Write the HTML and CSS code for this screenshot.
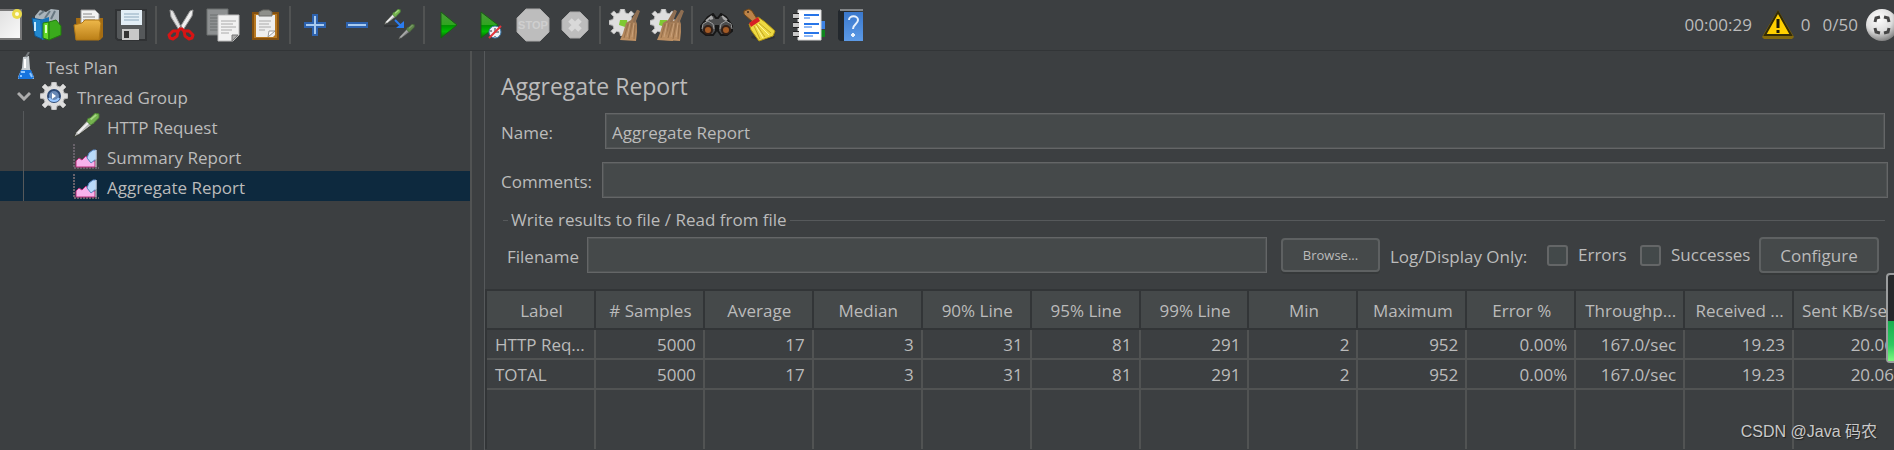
FILE: index.html
```html
<!DOCTYPE html>
<html lang="en">
	<head>
		<meta charset="UTF-8" />
		<meta name="viewport" content="width=device-width, initial-scale=1.0" />
		<title>Aggregate Report</title>
		<link rel="stylesheet" href="styles.css">
	</head>
	<body>
		<!-- shared icon parts -->
		<svg class="defs" width="0" height="0" aria-hidden="true">
			<defs>
				<linearGradient id="paper" x1="0" y1="0" x2="1" y2="1">
					<stop offset="0" stop-color="#dcdcdc" />
					<stop offset="1" stop-color="#fafafa" />
				</linearGradient>
				<linearGradient id="folder" x1="0" y1="0" x2="0" y2="1">
					<stop offset="0" stop-color="#eeb84a" />
					<stop offset="1" stop-color="#bb7f17" />
				</linearGradient>
				<linearGradient id="green" x1="0" y1="0" x2="0" y2="1">
					<stop offset="0" stop-color="#4f9a3c" />
					<stop offset="0.5" stop-color="#2ea51f" />
					<stop offset="0.52" stop-color="#009000" />
					<stop offset="0.75" stop-color="#00bd00" />
					<stop offset="1" stop-color="#0a5c08" />
				</linearGradient>
				<linearGradient id="book" x1="0" y1="0" x2="0" y2="1">
					<stop offset="0" stop-color="#3a78cc" />
					<stop offset="1" stop-color="#5c9ae6" />
				</linearGradient>
				<linearGradient id="straw" x1="0" y1="0" x2="0" y2="1">
					<stop offset="0" stop-color="#8c6a4c" />
					<stop offset="1" stop-color="#c09264" />
				</linearGradient>
				<radialGradient id="ball" cx="0.4" cy="0.3" r="0.7">
					<stop offset="0" stop-color="#ffffff" />
					<stop offset="0.6" stop-color="#dddddd" />
					<stop offset="1" stop-color="#858585" />
				</radialGradient>
			</defs>
			<symbol id="gear" viewBox="0 0 28 28">
				<path d="M12 0h4l1 4 3 1 3-3 3 3-3 3 1 3 4 1v4l-4 1-1 3 3 3-3 3-3-3-3 1-1 4h-4l-1-4-3-1-3 3-3-3 3-3-1-3-4-1v-4l4-1 1-3-3-3 3-3 3 3 3-1z" fill="#dedede" stroke="#b5b5b5" />
			</symbol>
			<symbol id="broom" viewBox="0 0 20 32">
				<path d="M17 1l3 1-4 10 1 3v8l-1 9-16-1 3-7 3-10 5-3z" fill="url(#straw)" />
				<path d="M18 1l-4 12" fill="none" stroke="#8d6f55" stroke-width="2" />
				<path d="M8 15L4 29M12 14l-3 16M15 16l-1 14" fill="none" stroke="#98704a" />
				<path d="M10 14L7 28M14 14l-2 14" fill="none" stroke="#cba27a" />
			</symbol>
			<symbol id="pipette" viewBox="0 0 30 28">
				<path d="M18 6l6 5L8 23l-6 3 2-5z" fill="#b9b9b9" stroke="#33372f" />
				<path d="M19 9L6 22" stroke="#f4f4f4" stroke-width="2" />
				<path d="M17 6l3-1 5-5 4 1v4l-6 6-3 2-4-4z" fill="#75b34f" stroke="#477c32" />
				<path d="M20 7l6-5" stroke="#a7d785" stroke-width="2" />
			</symbol>
			<symbol id="report" viewBox="0 0 28 26">
				<path d="M2 1v24h25" fill="none" stroke="#68626a" stroke-width="2" stroke-dasharray="2 1" />
				<path d="M4 24v-6l3-3 3 2 4-4 4 5h5v6z" fill="#f7b2eb" stroke="#b92f78" />
				<path d="M15 15l2-5 4-3h3v9l-5 4z" fill="#b9dafa" stroke="#5c88c5" />
				<path d="M24 7v17" stroke="#eee" />
			</symbol>
		</svg>

		<div class="app">
			<header class="toolbar">
				<div class="tools">
					<button type="button" class="tool tool-cut" aria-label="New">
						<svg width="32" height="32" viewBox="0 0 32 32">
							<path d="M1 1h30v29H1z" fill="url(#paper)" stroke="#777" stroke-width="2" />
							<circle cx="27" cy="5" r="5" fill="#eadb4a" />
							<circle cx="27" cy="5" r="2" fill="#fffde0" />
						</svg>
					</button>
					<button type="button" class="tool" aria-label="Templates">
						<svg width="32" height="32" viewBox="0 0 32 32">
							<path d="M4 7l5-6 6 2 5-3 8 1v14H4z" fill="#aab4bb" />
							<path d="M8 6l5-4M14 9l5-7M20 10l4-8" stroke="#687780" stroke-width="2" />
							<path d="M1 9l10 2v19L4 27z" fill="#2188cf" stroke="#0e5592" />
							<path d="M9 11l9-3v21l-7 2z" fill="#1571b6" />
							<path d="M4 13v9" stroke="#c8ecff" stroke-width="2" />
							<path d="M12 14l6-1v18l-6-2z" fill="#65d82a" stroke="#237b0d" />
							<path d="M18 13l7-2 5 6v9l-12 5z" fill="#3aab1c" stroke="#227d0d" />
							<path d="M15 16v8" stroke="#dcffc8" stroke-width="2" />
						</svg>
					</button>
					<button type="button" class="tool" aria-label="Open">
						<svg width="32" height="32" viewBox="0 0 32 32">
							<path d="M3 9h27v19l-3 3H4z" fill="#a66d12" />
							<path d="M8 1h14l4 4v14H8z" fill="#f2f2f2" stroke="#999" />
							<path d="M10 5h9M10 8h12M10 11h12" stroke="#888" />
							<path d="M1 16l8-2 3-3h14l2 3-2 17H3z" fill="url(#folder)" stroke="#b07714" />
						</svg>
					</button>
					<button type="button" class="tool" aria-label="Save">
						<svg width="32" height="32" viewBox="0 0 32 32">
							<path d="M1 1h30v30H3l-2-2z" fill="#55585a" stroke="#303234" stroke-width="2" />
							<path d="M6 1h21v15H6z" fill="#e3eef6" />
							<path d="M9 5h15M9 8h15M9 11h15" stroke="#8ea9bd" />
							<path d="M7 20h17v11H7z" fill="#c8c8c8" />
							<path d="M9 22h5v7H9z" fill="#333" />
						</svg>
					</button>
					<span class="sep"></span>
					<button type="button" class="tool" aria-label="Cut">
						<svg width="32" height="32" viewBox="0 0 32 32">
							<path d="M5 1l3 1 9 18-3 1L6 8z" fill="#e2e2e2" stroke="#999" />
							<path d="M28 1l-3 1-11 18 4 1 9-14z" fill="#f0f0f0" stroke="#999" />
							<circle cx="16" cy="18" r="1" fill="#777" />
							<path d="M13 22l-1 5-4 3-3-1-1-3 4-4zM19 22l1 5 4 3 3-1 1-3-4-4z" fill="none" stroke="#d81414" stroke-width="3" stroke-linejoin="round" />
							<path d="M16 19l-4 4M16 19l4 4" stroke="#d81414" stroke-width="3" />
						</svg>
					</button>
					<button type="button" class="tool" aria-label="Copy">
						<svg width="34" height="34" viewBox="0 0 34 34">
							<path d="M1 1h21v26H1z" fill="#8d9091" stroke="#6d7071" />
							<path d="M4 7h15M4 10h12M4 13h12M4 16h8M4 19h8M4 22h8" stroke="#6d7071" />
							<path d="M12 7h21v20l-6 6H12z" fill="#f1f1f1" stroke="#bbb" />
							<path d="M15 13h15M15 16h12M15 19h15M15 22h11M15 25h8" stroke="#aaa" />
							<path d="M26 33v-6h6z" fill="#aaa" stroke="#777" />
						</svg>
					</button>
					<button type="button" class="tool" aria-label="Paste">
						<svg width="32" height="32" viewBox="0 0 32 32">
							<path d="M4 4h25v26H4z" fill="#b77821" stroke="#84500f" stroke-width="2" />
							<path d="M7 6h19v20l-2 2H7z" fill="#eee" />
							<path d="M10 7V3l4-2h6l3 2v4z" fill="#8f908b" stroke="#6d6d68" />
							<path d="M10 12h12M10 15h10M10 18h12M10 21h6" stroke="#aaa" />
							<path d="M19 28l1-6h6z" fill="#fff" stroke="#999" />
						</svg>
					</button>
					<span class="sep"></span>
					<button type="button" class="tool" aria-label="Expand all">
						<svg width="22" height="22" viewBox="0 0 22 22">
							<path d="M9 1h4v8h8v4h-8v8H9v-8H1V9h8z" fill="#a9caed" stroke="#2d62ae" stroke-width="2" />
						</svg>
					</button>
					<button type="button" class="tool" aria-label="Collapse all">
						<svg width="22" height="22" viewBox="0 0 22 22">
							<path d="M1 9h20v4H1z" fill="#a9caed" stroke="#2d62ae" stroke-width="2" />
						</svg>
					</button>
					<button type="button" class="tool" aria-label="Toggle">
						<svg width="32" height="32" viewBox="0 0 32 32">
							<use href="#pipette" width="18" height="17" />
							<path d="M1 17h16" stroke="#292b2c" />
							<g opacity="0.600"><use href="#pipette" x="14" y="15" width="18" height="17" /></g>
							<path d="M12 11l6 6" stroke="#2a7cf0" stroke-width="2" />
							<path d="M21 12v7h-8z" fill="#2a7cf0" />
						</svg>
					</button>
					<span class="sep"></span>
					<button type="button" class="tool" aria-label="Start">
						<svg width="18" height="28" viewBox="0 0 18 28">
							<path d="M1 1l16 13L1 27z" fill="url(#green)" stroke="#176312" />
						</svg>
					</button>
					<button type="button" class="tool" aria-label="Start no pauses">
						<svg width="22" height="28" viewBox="0 0 22 28">
							<path d="M1 1l17 13L1 27z" fill="url(#green)" stroke="#176312" />
							<circle cx="15" cy="21" r="6" fill="#edf1f6" stroke="#3d79aa" />
							<path d="M15 17v4h4M10 20h2M15 25v1" fill="none" stroke="#333" />
							<path d="M9 27L21 15" stroke="#e3343c" stroke-width="2" />
						</svg>
					</button>
					<button type="button" class="tool" aria-label="Stop">
						<svg width="34" height="34" viewBox="0 0 34 34">
							<path d="M10 1h14l9 9v14l-9 9H10l-9-9V10z" fill="#bdbdbd" stroke="#aaa" />
							<text x="17" y="21" class="stop-text">STOP</text>
						</svg>
					</button>
					<button type="button" class="tool" aria-label="Shutdown">
						<svg width="28" height="28" viewBox="0 0 28 28">
							<path d="M9 1h10l8 8v10l-8 8H9l-8-8V9z" fill="#bdbdbd" stroke="#aaa" />
							<path d="M9 9l10 10M19 9L9 19" stroke="#d9d9d9" stroke-width="5" />
						</svg>
					</button>
					<span class="sep"></span>
					<button type="button" class="tool" aria-label="Clear">
						<svg width="32" height="34" viewBox="0 0 32 34">
							<use href="#gear" y="1" width="27" height="27" />
							<path d="M11 12h7l1 5-3 2-6-2z" fill="#7fc933" />
							<use href="#broom" x="11" y="1" width="20" height="32" />
						</svg>
					</button>
					<button type="button" class="tool" aria-label="Clear all">
						<svg width="34" height="34" viewBox="0 0 34 34">
							<use href="#gear" y="1" width="27" height="27" />
							<path d="M10 12h7l1 5-3 2-6-2z" fill="#7fc933" />
							<use href="#broom" x="7" y="1" width="20" height="32" />
							<use href="#broom" x="14" y="1" width="20" height="32" />
						</svg>
					</button>
					<span class="sep"></span>
					<button type="button" class="tool" aria-label="Search">
						<svg width="34" height="24" viewBox="0 0 34 24">
							<path d="M8 4l5-3 3 4h2l3-4 5 3 6 9v5l-5 4h-6l-3-4v-5h-2v5l-3 4H6l-5-4v-5z" fill="#4c4d4e" stroke="#171717" stroke-width="2" />
							<path d="M6 8l6-5M22 3l5 4M10 6l3-1M23 5l3 2" stroke="#a9a9a9" stroke-width="2" />
							<path d="M2 16l1-5 5-3 5 3 1 5M20 16l1-5 5-3 5 3 1 5" fill="none" stroke="#999" />
							<circle cx="8" cy="17" r="4" fill="#a35a25" stroke="#322018" stroke-width="2" />
							<circle cx="26" cy="17" r="4" fill="#a35a25" stroke="#322018" stroke-width="2" />
						</svg>
					</button>
					<button type="button" class="tool" aria-label="Reset search">
						<svg width="34" height="34" viewBox="0 0 34 34">
							<ellipse cx="21" cy="29" rx="12" ry="3" fill="#303335" />
							<path d="M2 3l5-2 3 2 5 8-4 3-7-6-2-2z" fill="#bc8348" stroke="#734817" />
							<circle cx="6" cy="4" r="1" fill="#3c2a1a" />
							<path d="M7 16l9-7 7 5 10 9-2 5-14 5-8-11z" fill="#edd942" stroke="#ad9213" />
							<path d="M12 18l6 13M14 16l9 13M17 15l12 10" fill="none" stroke="#c2a623" />
							<path d="M14 18l7 12M16 16l11 11" fill="none" stroke="#fff490" />
							<path d="M7 15l9-6 2 4-9 6z" fill="#d61f25" />
						</svg>
					</button>
					<span class="sep"></span>
					<button type="button" class="tool" aria-label="Function helper">
						<svg width="34" height="32" viewBox="0 0 34 32">
							<path d="M28 12h5v8h-5z" fill="#3d83e5" />
							<path d="M28 21h5v7h-5z" fill="#0e851d" />
							<path d="M6 1h23v30H6z" fill="#fff" stroke="#d5d5d5" />
							<path d="M12 6h15M12 15h15M12 24h15" stroke="#2775e8" stroke-width="2" />
							<path d="M12 9h6M12 18h8M12 27h9" stroke="#2775e8" />
							<path d="M1 7h6M1 16h6M1 25h6" stroke="#222" stroke-width="6" />
							<path d="M1 7h6M1 16h6M1 25h6" stroke="#c8c8c8" stroke-width="4" />
						</svg>
					</button>
					<button type="button" class="tool" aria-label="Help">
						<svg width="28" height="34" viewBox="0 0 28 34">
							<path d="M1 3l3-2h22v2l-19 1v29H3l-2-2z" fill="#23282d" />
							<path d="M3 2h23" stroke="#e5e5e5" />
							<path d="M7 4h19v29H7z" fill="url(#book)" />
							<path d="M12 12c0-5 9-5 9 0 0 4-5 4-5 9" fill="none" stroke="#e7f1fc" stroke-width="2" />
							<path d="M14 27h4M16 25v4" stroke="#e7f1fc" stroke-width="2" />
						</svg>
					</button>
				</div>
				<div class="status">
					<span class="elapsed">00:00:29</span>
					<svg class="warning" width="34" height="31" viewBox="0 0 34 31">
						<path d="M17 1l16 27-2 2H3l-2-2z" fill="#846a0c" />
						<path d="M17 3l13 23H4z" fill="#ffd000" stroke="#322b08" stroke-width="2" />
						<path d="M17 10v9M17 21v3" stroke="#1d1a0a" stroke-width="3" />
					</svg>
					<span class="errors">0</span>
					<span class="threads">0/50</span>
					<svg class="ball" width="32" height="32" viewBox="0 0 32 32">
						<circle cx="16" cy="16" r="16" fill="url(#ball)" />
						<path d="M9 13l1-4 4-1M18 8l4 1 1 4M9 19l1 4 4 1M18 24l4-1 1-4" fill="none" stroke="#454545" stroke-width="3" />
					</svg>
				</div>
			</header>

			<main class="workspace">
				<nav class="tree">
					<ul>
						<li class="node node-root">
							<svg width="18" height="28" viewBox="0 0 18 28">
								<path d="M6 5l6-1 1 13 4 8v2H1v-2l4-9z" fill="#c7cdd1" />
								<path d="M9 5l3-5" stroke="#777c7f" stroke-width="2" />
								<path d="M8 7v9" stroke="#fff" stroke-width="2" />
								<path d="M4 18h10l3 8-2 1H2l-1-1z" fill="#1674de" />
								<path d="M4 20h4M13 21l2 4M3 24h2" stroke="#8dc6ff" stroke-width="2" />
							</svg>
							<span>Test Plan</span>
						</li>
						<li class="node node-group">
							<svg width="14" height="10" viewBox="0 0 14 10">
								<path d="M1 2l6 6 6-6" fill="none" stroke="#adadad" stroke-width="3" />
							</svg>
							<svg width="28" height="28" viewBox="0 0 28 28">
								<use href="#gear" width="28" height="28" />
								<circle cx="14" cy="14" r="6" fill="#6888b5" stroke="#2c4975" stroke-width="2" />
								<path d="M9 16c2 4 8 4 10 0" fill="none" stroke="#9ac8ff" stroke-width="2" />
								<path d="M12 11l4 3-4 3z" fill="#fff" />
							</svg>
							<span>Thread Group</span>
						</li>
						<li class="node node-leaf">
							<svg width="28" height="26"><use href="#pipette" /></svg>
							<span>HTTP Request</span>
						</li>
						<li class="node node-leaf">
							<svg width="28" height="26"><use href="#report" /></svg>
							<span>Summary Report</span>
						</li>
						<li class="node node-leaf selected">
							<svg width="28" height="26"><use href="#report" /></svg>
							<span>Aggregate Report</span>
						</li>
					</ul>
				</nav>

				<section class="panel">
					<form class="settings">
						<h1>Aggregate Report</h1>
						<div class="row row-name">
							<label for="name">Name:</label>
							<input type="text" id="name" value="Aggregate Report" />
						</div>
						<div class="row row-comments">
							<label for="comments">Comments:</label>
							<input type="text" id="comments" />
						</div>
						<div class="group-title">Write results to file / Read from file</div>
						<div class="row row-file">
							<label for="filename">Filename</label>
							<input type="text" id="filename" />
							<button type="button" class="btn btn-browse">Browse...</button>
							<span class="log-label">Log/Display Only:</span>
							<label class="check"><input type="checkbox" />Errors</label>
							<label class="check"><input type="checkbox" />Successes</label>
							<button type="button" class="btn btn-configure">Configure</button>
						</div>
					</form>

					<div class="results">
						<table>
							<thead>
								<tr>
									<th>Label</th>
									<th># Samples</th>
									<th>Average</th>
									<th>Median</th>
									<th>90% Line</th>
									<th>95% Line</th>
									<th>99% Line</th>
									<th>Min</th>
									<th>Maximum</th>
									<th>Error %</th>
									<th>Throughp...</th>
									<th>Received ...</th>
									<th>Sent KB/sec</th>
								</tr>
							</thead>
							<tbody>
								<tr>
									<td>HTTP Req...</td>
									<td>5000</td>
									<td>17</td>
									<td>3</td>
									<td>31</td>
									<td>81</td>
									<td>291</td>
									<td>2</td>
									<td>952</td>
									<td>0.00%</td>
									<td>167.0/sec</td>
									<td>19.23</td>
									<td>20.06</td>
								</tr>
								<tr>
									<td>TOTAL</td>
									<td>5000</td>
									<td>17</td>
									<td>3</td>
									<td>31</td>
									<td>81</td>
									<td>291</td>
									<td>2</td>
									<td>952</td>
									<td>0.00%</td>
									<td>167.0/sec</td>
									<td>19.23</td>
									<td>20.06</td>
								</tr>
								<tr class="filler">
									<td></td><td></td><td></td><td></td><td></td><td></td><td></td>
									<td></td><td></td><td></td><td></td><td></td><td></td>
								</tr>
							</tbody>
						</table>
					</div>
				</section>
			</main>

			<div class="meter"><div class="meter-fill"></div></div>
			<div class="watermark">CSDN @Java 码农</div>
		</div>
	</body>
</html>
```
FILE: styles.css
```css
* {
	box-sizing: border-box;
	margin: 0;
	padding: 0;
}

body {
	background-color: #3c3f41;
	color: #bbbbbb;
	font-family: "Open Sans", "Noto Sans", sans-serif;
	font-size: 17px;
	line-height: 24px;
}

input,
button {
	font: inherit;
	color: inherit;
}

.defs {
	position: absolute;
}

.app {
	position: relative;
	display: flex;
	flex-direction: column;
	min-height: 100vh;
	overflow: hidden;
}

/* toolbar */
.toolbar {
	display: flex;
	justify-content: space-between;
	height: 51px;
	padding-bottom: 9px;
	border-bottom: 1px solid #323537;
	overflow: hidden;
}

.tools,
.status {
	display: flex;
	align-items: center;
}

.tool {
	display: flex;
	flex: none;
	align-items: center;
	justify-content: center;
	width: 42px;
	height: 42px;
	margin-top: 8px;
	background: none;
	border: none;
}

.tool-cut {
	justify-content: flex-end;
	width: 26px;
	padding-right: 4px;
}

.tool svg {
	flex: none;
}

.stop-text {
	font: bold 11px "Liberation Sans", sans-serif;
	fill: #cfcfcf;
	text-anchor: middle;
}

.sep {
	flex: none;
	width: 2px;
	height: 38px;
	margin: 8px 3px 0;
	background-color: #515353;
}

.status {
	flex: none;
	margin-right: -4px;
	padding-top: 8px;
}

.warning {
	margin: 0 6px 0 9px;
}

.threads {
	margin: 0 8px 0 12px;
}

/* test plan tree */
.workspace {
	display: flex;
	flex: 1;
}

.tree {
	flex: none;
	width: 472px;
	border-right: 2px solid #515353;
}

.tree ul {
	list-style: none;
}

.node {
	display: flex;
	align-items: center;
	height: 30px;
}

.node span,
.row > label:first-child,
.log-label {
	padding-top: 3px;
}

.node-root {
	gap: 11px;
	padding-left: 17px;
}

.node-group {
	gap: 9px;
	padding-left: 17px;
}

.node-leaf::before {
	content: "";
	width: 23px;
	height: 30px;
	margin-right: 48px;
	border-right: 1px solid #56595b;
}

.node-leaf svg {
	margin-right: 7px;
}

.selected {
	background-color: #0d293e;
}

/* report panel */
.panel {
	flex: 1;
	min-width: 0;
	margin-left: 12px;
	border-left: 1px solid #56595b;
}

.settings {
	padding: 20px 6px 16px 16px;
}

h1 {
	margin-bottom: 12px;
	font-size: 23px;
	font-weight: normal;
	line-height: 30px;
}

.row {
	display: flex;
	align-items: center;
}

.row-name {
	margin-bottom: 13px;
	padding-right: 3px;
}

.row-name label {
	width: 104px;
}

.row-comments label {
	width: 101px;
}

input[type="text"] {
	flex: 1;
	min-width: 0;
	height: 36px;
	padding: 2px 6px 0;
	background-color: #45494a;
	border: 1px solid #646667;
	box-shadow: inset 0 0 0 1px #515455;
	outline: none;
}

.group-title {
	display: flex;
	align-items: center;
	gap: 3px;
	margin: 10px 3px 5px 2px;
}

.group-title::before,
.group-title::after {
	content: "";
	width: 5px;
	height: 1px;
	background-color: #56595b;
}

.group-title::after {
	flex: 1;
}

.row-file {
	padding: 0 9px 0 6px;
}

.row-file > label:first-child {
	width: 80px;
}

.btn {
	height: 36px;
	background-color: #45494a;
	border: 2px solid #5e6162;
	border-radius: 4px;
	box-shadow: 0 2px 0 #36393a;
}

.btn-browse {
	width: 99px;
	height: 34px;
	margin: 0 10px 0 14px;
	font-size: 13px;
}

.btn-configure {
	width: 120px;
	padding-top: 2px;
}

.log-label {
	width: 157px;
}

.check {
	display: flex;
	align-items: center;
	gap: 10px;
	width: 93px;
}

.check + .check {
	width: 119px;
}

.check input {
	appearance: none;
	flex: none;
	width: 21px;
	height: 21px;
	background-color: #43494a;
	border: 2px solid #646667;
	border-radius: 3px;
}

/* results table */
.results {
	border-top: 2px solid #323537;
	border-left: 2px solid #323537;
	overflow: hidden;
}

table {
	width: calc(100% + 9px);
	table-layout: fixed;
	border-collapse: separate;
	border-spacing: 0;
}

th,
td {
	height: 30px;
	padding: 2px 7px 0 8px;
	border-right: 2px solid #515353;
	border-bottom: 2px solid #515353;
	font-weight: normal;
	text-align: right;
	white-space: nowrap;
}

th {
	height: 39px;
	padding: 3px 0 0 2px;
	background-color: #45494a;
	border-color: #323537;
	text-align: center;
}

td:first-child {
	text-align: left;
}

.filler td {
	height: 59px;
	border-bottom: none;
}

/* things floating over the window */
.meter {
	position: absolute;
	top: 273px;
	right: -8px;
	display: flex;
	align-items: flex-end;
	width: 16px;
	height: 90px;
	background-color: #26282a;
	border: 2px solid #9b9d9e;
	border-radius: 4px;
}

.meter-fill {
	width: 100%;
	height: 40px;
	background: linear-gradient(#17ae50, #2fc961 60%, #7dfa80);
}

.watermark {
	position: absolute;
	right: 17px;
	bottom: 6px;
	color: #c9c9c9;
	font-family: "Liberation Sans", "Noto Sans CJK SC", sans-serif;
	font-size: 16px;
	text-shadow: 1px 1px 1px #222222;
}
```
